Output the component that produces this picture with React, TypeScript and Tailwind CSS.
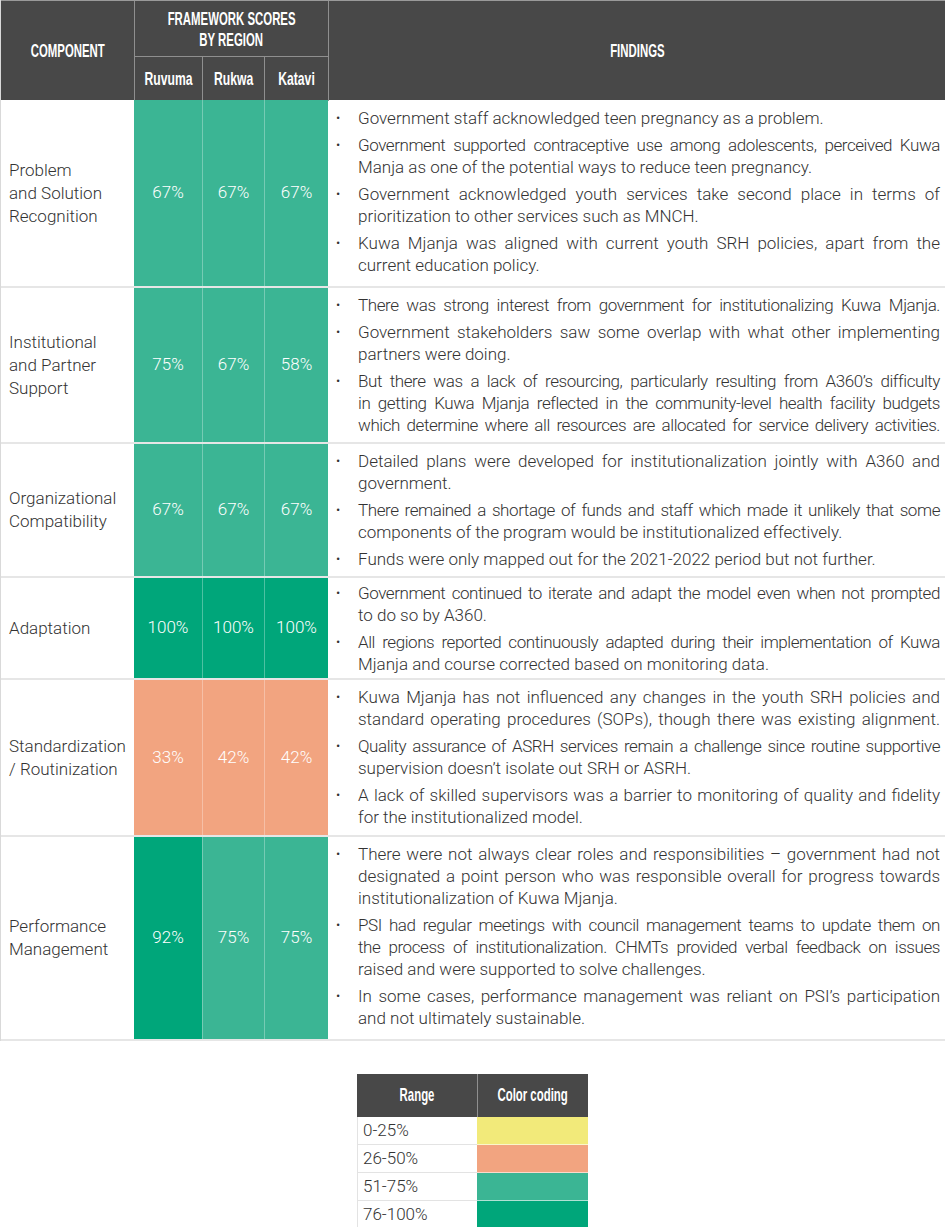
type Finding = { lines: string[]; full?: number[]; tight?: number[] };

type Row = {
  component: string[];
  scores: string[];
  colors: string[];
  height: string;
  pad: string;
  findings: Finding[];
};

const TEAL = 'bg-[#3bb594]';
const GREEN = 'bg-[#00a67a]';
const SALMON = 'bg-[#f2a480]';

const rows: Row[] = [
  {
    component: ['Problem', 'and Solution', 'Recognition'],
    scores: ['67%', '67%', '67%'],
    colors: [TEAL, TEAL, TEAL],
    height: 'min-h-[188px]',
    pad: 'pt-[7px] pb-[6px]',
    findings: [
      { lines: ['Government staff acknowledged teen pregnancy as a problem.'] },
      { lines: ['Government supported contraceptive use among adolescents, perceived Kuwa', 'Manja as one of the potential ways to reduce teen pregnancy.'], tight: [0] },
      { lines: ['Government acknowledged youth services take second place in terms of', 'prioritization to other services such as MNCH.'] },
      { lines: ['Kuwa Mjanja was aligned with current youth SRH policies, apart from the', 'current education policy.'] },
    ],
  },
  {
    component: ['Institutional', 'and Partner', 'Support'],
    scores: ['75%', '67%', '58%'],
    colors: [TEAL, TEAL, TEAL],
    height: 'min-h-[156px]',
    pad: 'py-[6px]',
    findings: [
      { lines: ['There was strong interest from government for institutionalizing Kuwa Mjanja.'], full: [0], tight: [0] },
      { lines: ['Government stakeholders saw some overlap with what other implementing', 'partners were doing.'] },
      {
        lines: [
          'But there was a lack of resourcing, particularly resulting from A360’s difficulty',
          'in getting Kuwa Mjanja reflected in the community-level health facility budgets',
          'which determine where all resources are allocated for service delivery activities.',
        ],
        full: [2],
        tight: [0, 1, 2],
      },
    ],
  },
  {
    component: ['Organizational', 'Compatibility'],
    scores: ['67%', '67%', '67%'],
    colors: [TEAL, TEAL, TEAL],
    height: 'min-h-[134px]',
    pad: 'pt-[6px] pb-[5px]',
    findings: [
      { lines: ['Detailed plans were developed for institutionalization jointly with A360 and', 'government.'] },
      { lines: ['There remained a shortage of funds and staff which made it unlikely that some', 'components of the program would be institutionalized effectively.'], tight: [0] },
      { lines: ['Funds were only mapped out for the 2021-2022 period but not further.'] },
    ],
  },
  {
    component: ['Adaptation'],
    scores: ['100%', '100%', '100%'],
    colors: [GREEN, GREEN, GREEN],
    height: 'min-h-[102px]',
    pad: 'pt-[4px] pb-[3px]',
    findings: [
      { lines: ['Government continued to iterate and adapt the model even when not prompted', 'to do so by A360.'], tight: [0] },
      { lines: ['All regions reported continuously adapted during their implementation of Kuwa', 'Mjanja and course corrected based on monitoring data.'], tight: [0] },
    ],
  },
  {
    component: ['Standardization', '/ Routinization'],
    scores: ['33%', '42%', '42%'],
    colors: [SALMON, SALMON, SALMON],
    height: 'min-h-[157px]',
    pad: 'py-[6px]',
    findings: [
      {
        lines: ['Kuwa Mjanja has not influenced any changes in the youth SRH policies and', 'standard operating procedures (SOPs), though there was existing alignment.'],
        full: [1],
      },
      { lines: ['Quality assurance of ASRH services remain a challenge since routine supportive', 'supervision doesn’t isolate out SRH or ASRH.'], tight: [0] },
      { lines: ['A lack of skilled supervisors was a barrier to monitoring of quality and fidelity', 'for the institutionalized model.'] },
    ],
  },
  {
    component: ['Performance', 'Management'],
    scores: ['92%', '75%', '75%'],
    colors: [GREEN, TEAL, TEAL],
    height: 'min-h-[204px]',
    pad: 'py-[6px]',
    findings: [
      {
        lines: [
          'There were not always clear roles and responsibilities – government had not',
          'designated a point person who was responsible overall for progress towards',
          'institutionalization of Kuwa Mjanja.',
        ],
      },
      {
        lines: [
          'PSI had regular meetings with council management teams to update them on',
          'the process of institutionalization. CHMTs provided verbal feedback on issues',
          'raised and were supported to solve challenges.',
        ],
        tight: [0, 1],
      },
      { lines: ['In some cases, performance management was reliant on PSI’s participation', 'and not ultimately sustainable.'] },
    ],
  },
];

const legend = [
  { range: '0-25%', color: 'bg-[#f2ea7a]' },
  { range: '26-50%', color: 'bg-[#f2a480]' },
  { range: '51-75%', color: 'bg-[#3bb594]' },
  { range: '76-100%', color: 'bg-[#00a67a]' },
];

// condensed header look: Arial-width bold squeezed horizontally
function Head({ children, className = '' }: { children: React.ReactNode; className?: string }) {
  return (
    <span
      className={`inline-block origin-center scale-x-[0.6] whitespace-nowrap font-['Liberation_Sans',Arial,sans-serif] text-[19px] font-bold text-white ${className}`}
    >
      {children}
    </span>
  );
}

function Bullet({ finding }: { finding: Finding }) {
  const last = finding.lines.length - 1;
  return (
    <div className="flex">
      <span className="w-[22px] shrink-0 text-[13px] leading-[22px]">•</span>
      <div className="w-[582px]">
        {finding.lines.map((line, i) => {
          const justify = i < last || finding.full?.includes(i);
          const tight = finding.tight?.includes(i);
          return (
            <div
              key={i}
              className={`whitespace-nowrap ${justify ? 'text-justify [text-align-last:justify]' : ''} ${tight ? 'tracking-[-0.025em]' : ''}`}
            >
              {line}
            </div>
          );
        })}
      </div>
    </div>
  );
}

export default function App() {
  return (
    <div className="w-[945px] bg-white font-[Roboto,sans-serif] font-light text-[#333333]">
      <div className="border-l border-[#d9d9d9]">
        <div className="grid h-[100px] grid-cols-[133px_68px_62px_64px_1fr] grid-rows-[56px_44px] border-t border-[#9a9a9a] bg-[#484848]">
          <div className="row-span-2 flex items-center justify-center">
            <Head>COMPONENT</Head>
          </div>
          <div className="col-span-3 flex flex-col items-center justify-center border-b border-l border-[#8f8f8f] leading-[21px]">
            <Head>FRAMEWORK SCORES</Head>
            <Head>BY REGION</Head>
          </div>
          <div className="row-span-2 flex items-center justify-center border-l border-[#8f8f8f]">
            <Head>FINDINGS</Head>
          </div>
          {['Ruvuma', 'Rukwa', 'Katavi'].map((r) => (
            <div key={r} className="flex items-center justify-center border-l border-[#8f8f8f]">
              <Head className="scale-x-[0.64]">{r}</Head>
            </div>
          ))}
        </div>

        {rows.map((row) => (
          <div key={row.component.join(' ')} className={`grid grid-cols-[133px_68px_62px_64px_1fr] border-b-2 border-[#e6e6e6] ${row.height}`}>
            <div className="flex flex-col justify-center pl-[8px] text-[17px] leading-[23px]">
              {row.component.map((c) => (
                <span key={c}>{c}</span>
              ))}
            </div>
            {row.scores.map((s, i) => (
              <div key={i} className={`flex items-center justify-center text-[17px] text-white ${row.colors[i]} ${i > 0 ? 'border-l border-white/30' : ''}`}>
                {s}
              </div>
            ))}
            <div className={`flex flex-col gap-[5px] pl-[8px] text-[17px] leading-[22px] ${row.pad}`}>
              {row.findings.map((f, i) => (
                <Bullet key={i} finding={f} />
              ))}
            </div>
          </div>
        ))}
      </div>

      <div className="flex justify-center pt-[33px]">
        <div className="w-[231px]">
          <div className="grid h-[43px] grid-cols-[120px_111px] bg-[#484848]">
            <div className="flex items-center justify-center">
              <Head>Range</Head>
            </div>
            <div className="flex items-center justify-center border-l border-[#8f8f8f]">
              <Head>Color coding</Head>
            </div>
          </div>
          {legend.map((l) => (
            <div key={l.range} className="grid h-[28px] grid-cols-[120px_111px]">
              <div className="flex items-center border-b border-l border-[#e3e3e3] pl-[5px] text-[17px]">{l.range}</div>
              <div className={`${l.color} border-b border-white/60`} />
            </div>
          ))}
        </div>
      </div>
    </div>
  );
}
